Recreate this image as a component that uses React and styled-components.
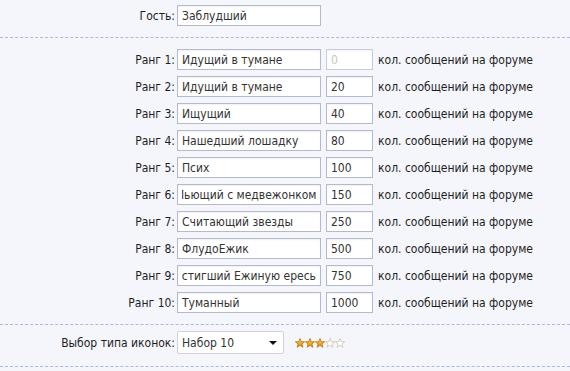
import React, { useEffect, useRef } from 'react';
import styled, { createGlobalStyle } from 'styled-components';

const GlobalStyle = createGlobalStyle`
  html, body {
    margin: 0;
    padding: 0;
    background: #f5f6fb;
  }
  body {
    font-family: Tahoma, "DejaVu Sans Condensed", "DejaVu Sans", sans-serif;
    font-size: 12px;
    color: #1e1e1e;
  }
`;

const Page = styled.div`
  width: 570px;
  overflow: hidden;
`;

const Section = styled.div`
  padding: ${(p) => p.pad || '8px 0'};
  border-bottom: ${(p) => (p.noLine ? 'none' : '1px dashed #a9b9e6')};
`;

const Row = styled.div`
  display: grid;
  grid-template-columns: 175px auto;
  align-items: center;
  column-gap: 2px;
  height: ${(p) => p.h || 27}px;
`;

const Label = styled.label`
  text-align: right;
  white-space: nowrap;
`;

const Fields = styled.div`
  display: flex;
  align-items: center;
  gap: 5px;
`;

const TextInput = styled.input`
  box-sizing: border-box;
  width: ${(p) => p.w}px;
  height: 21px;
  margin: 0;
  padding: 0 4px;
  border: 1px solid #b5b9cd;
  border-radius: 0;
  background: #fff;
  box-shadow: inset 0 1px 2px rgba(0, 0, 0, 0.06);
  font-family: inherit;
  font-size: 12px;
  color: #333;
  outline: none;
  &:disabled {
    color: #c4c4c4;
    border-color: #c9ccda;
  }
`;

const Hint = styled.span`
  white-space: nowrap;
`;

const SelectWrap = styled.div`
  position: relative;
  width: 107px;
  height: 23px;
  &::after {
    content: '';
    position: absolute;
    right: 7px;
    top: 10px;
    border-left: 4px solid transparent;
    border-right: 4px solid transparent;
    border-top: 4px solid #111;
    pointer-events: none;
  }
`;

const Select = styled.select`
  box-sizing: border-box;
  appearance: none;
  width: 100%;
  height: 100%;
  margin: 0;
  padding: 0 4px;
  border: 1px solid #d0d3de;
  border-radius: 2px;
  background: #fff;
  font-family: inherit;
  font-size: 12px;
  color: #333;
  outline: none;
`;

const Stars = styled.div`
  display: flex;
  margin-left: 6px;
`;

const Star = ({ filled }) => (
  <svg width="10" height="10" viewBox="0 0 10 10">
    <defs>
      <linearGradient id="gold" x1="0" y1="0" x2="0" y2="1">
        <stop offset="0" stopColor="#ffd56a" />
        <stop offset="1" stopColor="#d98a00" />
      </linearGradient>
    </defs>
    <path
      d="M5 0.5 L6.2 3.7 L9.6 3.8 L6.9 5.9 L7.9 9.3 L5 7.3 L2.1 9.3 L3.1 5.9 L0.4 3.8 L3.8 3.7 Z"
      fill={filled ? 'url(#gold)' : '#fff'}
      stroke={filled ? '#b87400' : '#c8c4a8'}
      strokeWidth="0.8"
      strokeLinejoin="round"
    />
  </svg>
);

// поле, прокрученное к концу текста, как после ввода
const EndInput = (props) => {
  const ref = useRef(null);
  useEffect(() => {
    if (ref.current) ref.current.scrollLeft = ref.current.scrollWidth;
  }, []);
  return <TextInput ref={ref} {...props} />;
};

const ranks = [
  ['Идущий в тумане', '0'],
  ['Идущий в тумане', '20'],
  ['Ищущий', '40'],
  ['Нашедший лошадку', '80'],
  ['Псих', '100'],
  ['Пьющий с медвежонком', '150'],
  ['Считающий звезды', '250'],
  ['ФлудоЕжик', '500'],
  ['Постигший Ежиную ересь', '750'],
  ['Туманный', '1000'],
];

export default function App() {
  return (
    <Page>
      <GlobalStyle />
      <Section pad="2px 0 8px">
        <Row>
          <Label>Гость:</Label>
          <Fields>
            <TextInput w={144} defaultValue="Заблудший" />
          </Fields>
        </Row>
      </Section>
      <Section>
        {ranks.map(([name, count], i) => (
          <Row key={i}>
            <Label>Ранг {i + 1}:</Label>
            <Fields>
              <EndInput w={144} defaultValue={name} />
              <TextInput w={47} defaultValue={count} disabled={i === 0} />
              <Hint>кол. сообщений на форуме</Hint>
            </Fields>
          </Row>
        ))}
      </Section>
      <Section pad="6px 0 12px">
        <Row h={23}>
          <Label>Выбор типа иконок:</Label>
          <Fields>
            <SelectWrap>
              <Select defaultValue="10">
                {Array.from({ length: 12 }, (_, k) => (
                  <option key={k} value={String(k + 1)}>
                    Набор {k + 1}
                  </option>
                ))}
              </Select>
            </SelectWrap>
            <Stars>
              {[1, 2, 3, 4, 5].map((n) => (
                <Star key={n} filled={n <= 3} />
              ))}
            </Stars>
          </Fields>
        </Row>
      </Section>
    </Page>
  );
}
